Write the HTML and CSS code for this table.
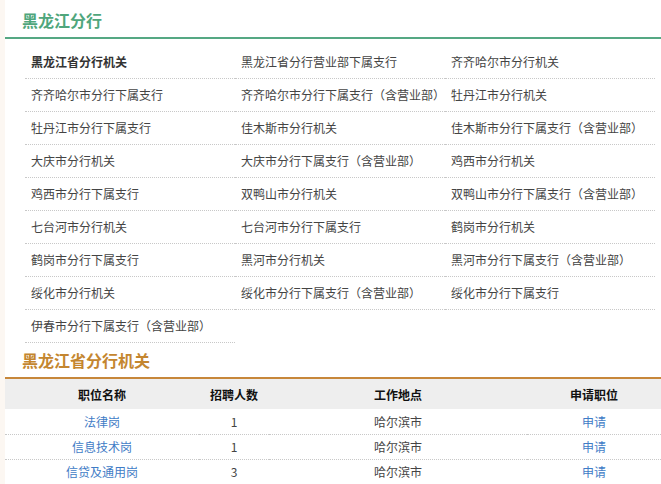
FILE: index.html
```html
<!DOCTYPE html>
<html lang="zh-CN">
<head>
<meta charset="utf-8">
<title>黑龙江分行</title>
<link rel="stylesheet" href="styles.css">
</head>
<body>
<div class="wrap">
  <h2 class="title title-green">黑龙江分行</h2>
  <ul class="branches">
    <li class="strong">黑龙江省分行机关</li>
    <li>黑龙江省分行营业部下属支行</li>
    <li>齐齐哈尔市分行机关</li>
    <li>齐齐哈尔市分行下属支行</li>
    <li>齐齐哈尔市分行下属支行（含营业部）</li>
    <li>牡丹江市分行机关</li>
    <li>牡丹江市分行下属支行</li>
    <li>佳木斯市分行机关</li>
    <li>佳木斯市分行下属支行（含营业部）</li>
    <li>大庆市分行机关</li>
    <li>大庆市分行下属支行（含营业部）</li>
    <li>鸡西市分行机关</li>
    <li>鸡西市分行下属支行</li>
    <li>双鸭山市分行机关</li>
    <li>双鸭山市分行下属支行（含营业部）</li>
    <li>七台河市分行机关</li>
    <li>七台河市分行下属支行</li>
    <li>鹤岗市分行机关</li>
    <li>鹤岗市分行下属支行</li>
    <li>黑河市分行机关</li>
    <li>黑河市分行下属支行（含营业部）</li>
    <li>绥化市分行机关</li>
    <li>绥化市分行下属支行（含营业部）</li>
    <li>绥化市分行下属支行</li>
    <li>伊春市分行下属支行（含营业部）</li>
  </ul>
  <h2 class="title title-orange">黑龙江省分行机关</h2>
  <table class="jobs">
    <colgroup>
      <col class="c1"><col class="c2"><col class="c3"><col class="c4">
    </colgroup>
    <thead>
      <tr><th>职位名称</th><th>招聘人数</th><th>工作地点</th><th>申请职位</th></tr>
    </thead>
    <tbody>
      <tr><td><a href="#">法律岗</a></td><td>1</td><td>哈尔滨市</td><td><a href="#">申请</a></td></tr>
      <tr><td><a href="#">信息技术岗</a></td><td>1</td><td>哈尔滨市</td><td><a href="#">申请</a></td></tr>
      <tr><td><a href="#">信贷及通用岗</a></td><td>3</td><td>哈尔滨市</td><td><a href="#">申请</a></td></tr>
    </tbody>
  </table>
</div>
</body>
</html>
```

FILE: styles.css
```css
* { box-sizing: border-box; }
html, body {
  margin: 0;
  padding: 0;
  background: #fcf7f2;
}
body {
  font-family: "Noto Sans CJK SC", "Noto Sans", sans-serif;
  font-size: 12px;
  color: #444;
}
.wrap {
  margin-left: 5px;
  width: 656px;
  min-height: 484px;
  background: #fff;
}
.title {
  margin: 0;
  padding-left: 17px;
  font-size: 16px;
  font-weight: bold;
}
.title-green {
  height: 39px;
  padding-top: 4px;
  line-height: 33px;
  color: #4fa67c;
  border-bottom: 2px solid #55a883;
}
.title-orange {
  height: 36px;
  line-height: 34px;
  color: #c4862f;
  border-bottom: 2px solid #c7873a;
}
.branches {
  list-style: none;
  margin: 7px 0 0 0;
  padding: 0 0 0 20px;
  display: grid;
  grid-template-columns: repeat(3, 210px);
}
.branches li {
  height: 33px;
  line-height: 32px;
  padding-left: 6px;
  border-bottom: 1px dotted #c8c8c8;
  white-space: nowrap;
}
.branches li.strong {
  font-weight: bold;
  color: #333;
}
.jobs {
  width: 656px;
  border-collapse: collapse;
  table-layout: fixed;
}
.jobs col.c1 { width: 194px; }
.jobs col.c2 { width: 70px; }
.jobs col.c3 { width: 258px; }
.jobs col.c4 { width: 134px; }
.jobs th {
  height: 30px;
  padding: 0;
  background: #eeeeee;
  color: #111;
  font-weight: bold;
  text-align: center;
}
.jobs td {
  height: 25px;
  padding: 0;
  text-align: center;
  color: #444;
  border-bottom: 1px dotted #c8c8c8;
}
.jobs a {
  color: #3f7cc6;
  text-decoration: none;
}
```
